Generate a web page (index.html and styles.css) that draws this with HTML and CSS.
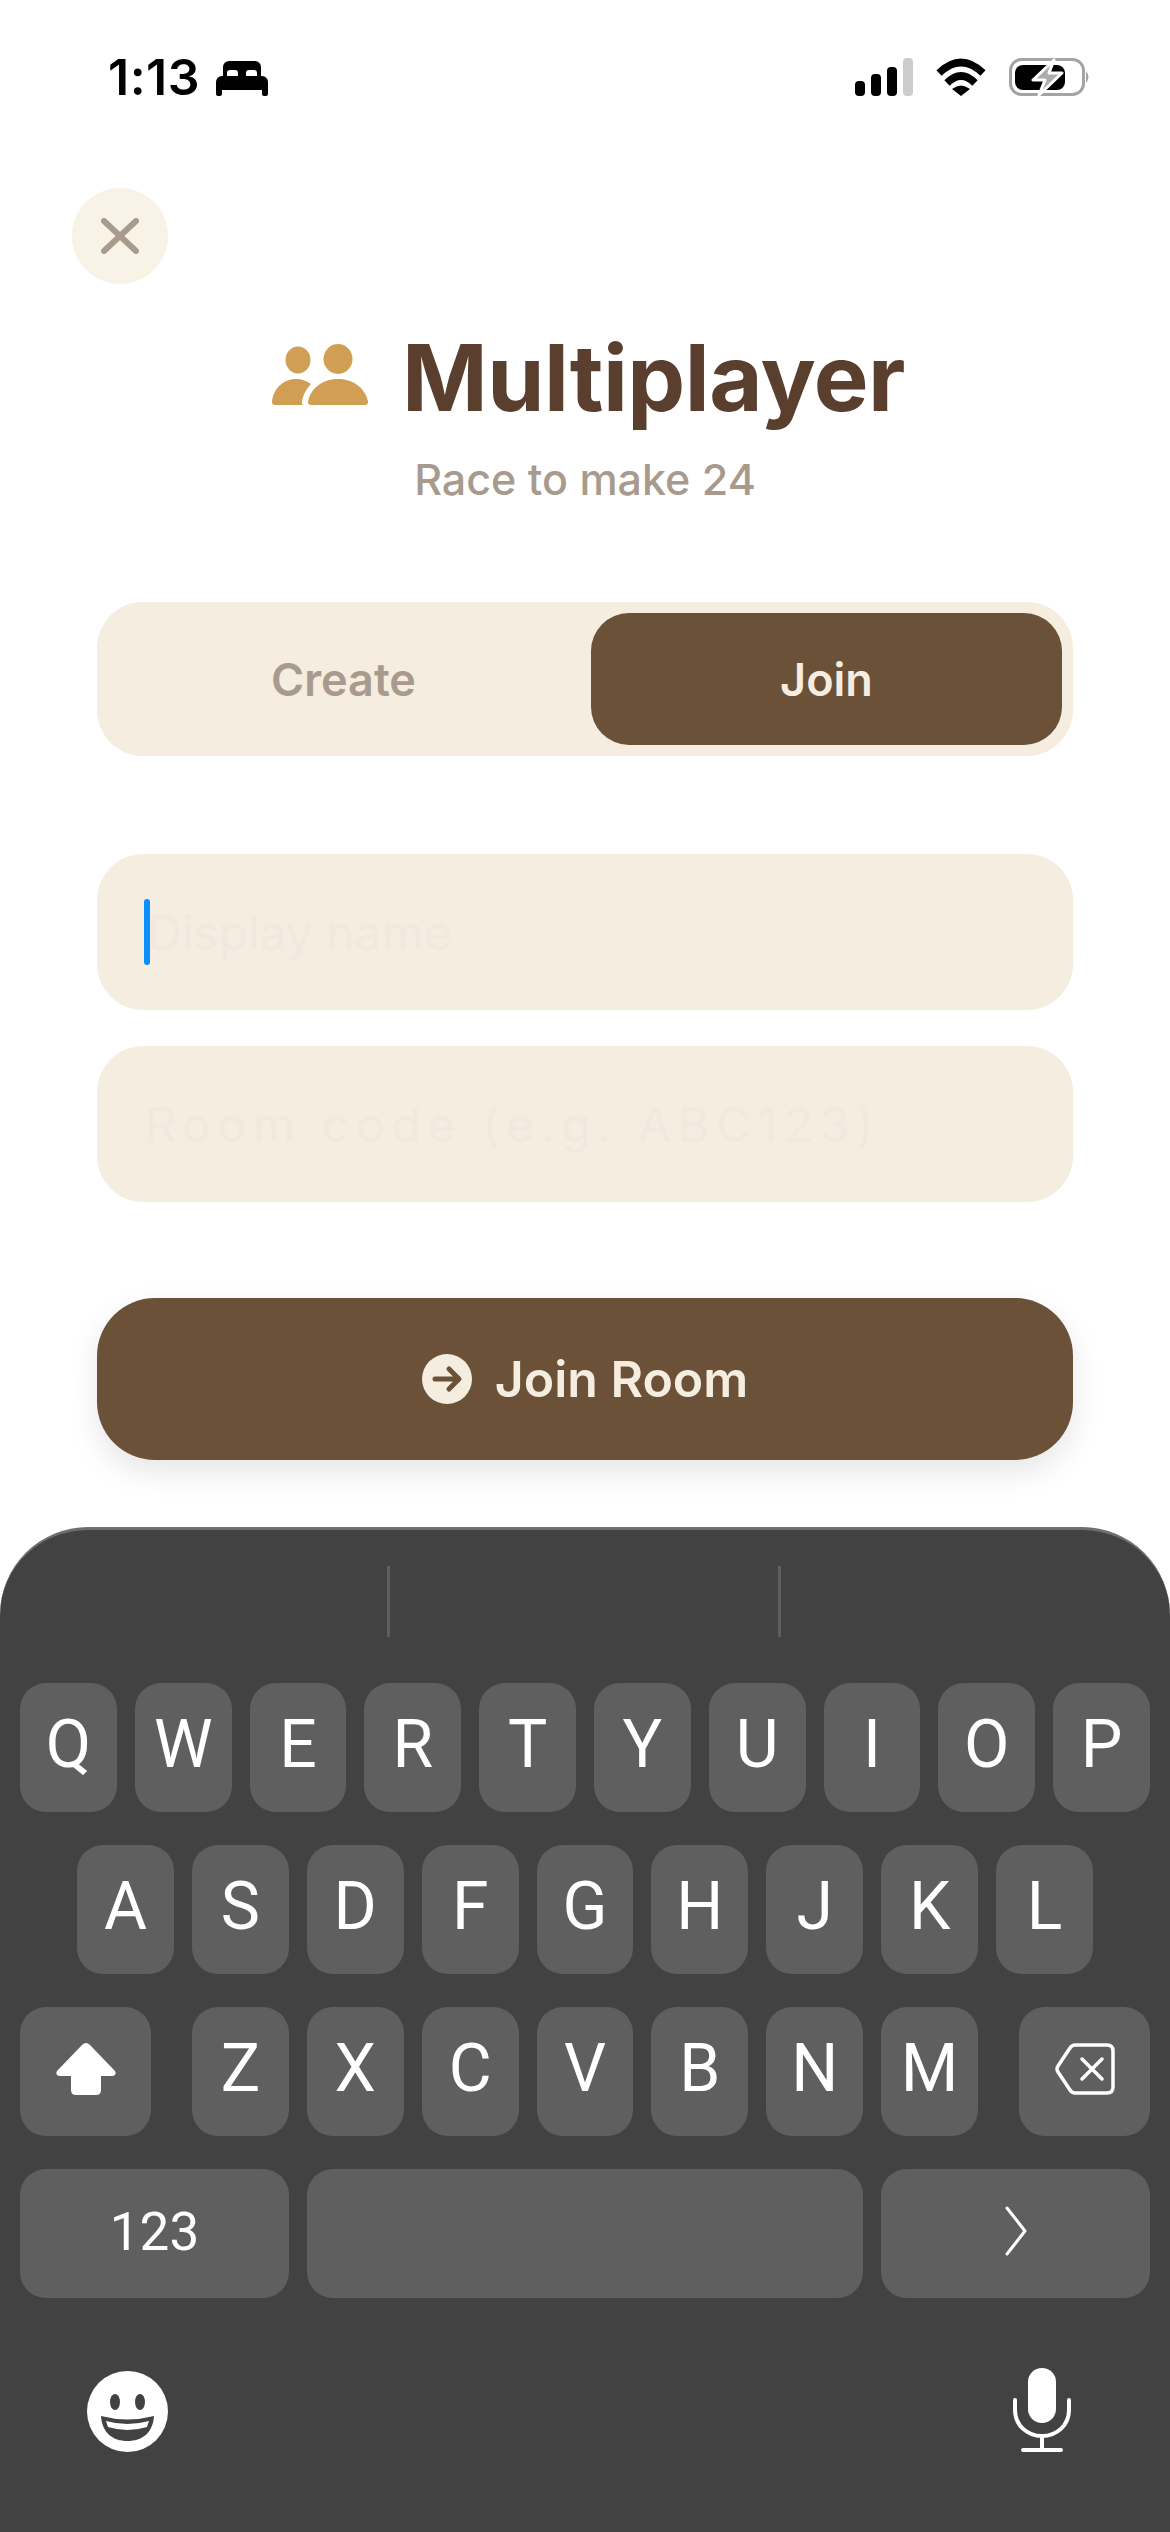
FILE: index.html
```html
<!DOCTYPE html>
<html lang="en">
<head>
    <meta charset="UTF-8">
    <meta name="viewport" content="width=device-width, initial-scale=1.0">
    <title>Multiplayer</title>
    <link rel="stylesheet" href="styles.css">
</head>
<body>
<div class="screen">

    <!-- Status Bar -->
    <header class="status-bar">
        <div class="status-left">
            <span class="time">1:13</span>
            <svg class="bed-icon" viewBox="0 0 52 35" width="52" height="35">
                <path d="M7 15V6a6 6 0 0 1 6-6h26a6 6 0 0 1 6 6v9h-4v-3a3 3 0 0 0-3-3h-5a3 3 0 0 0-3 3v3h-8v-3a3 3 0 0 0-3-3h-5a3 3 0 0 0-3 3v3z"/>
                <path d="M6 15h40a6 6 0 0 1 6 6v12a2 2 0 0 1-2 2h-2a2 2 0 0 1-2-2v-4H6v4a2 2 0 0 1-2 2H2a2 2 0 0 1-2-2V21a6 6 0 0 1 6-6z"/>
            </svg>
        </div>
        <div class="status-right">
            <svg viewBox="0 0 58 38" width="58" height="38">
                <rect x="0" y="23" width="10" height="15" rx="4"/>
                <rect x="16" y="16" width="10" height="22" rx="4"/>
                <rect x="32" y="9" width="10" height="29" rx="4"/>
                <rect x="48" y="0" width="10" height="38" rx="4" fill="#cccccc"/>
            </svg>
            <svg viewBox="0 0 50 38" width="50" height="38">
                <path d="M3 15Q25 -6 47 15" fill="none" stroke="#000" stroke-width="7.5"/>
                <path d="M11 25Q25 11 39 25" fill="none" stroke="#000" stroke-width="7.5"/>
                <path d="M16 31Q25 24 34 31L25 38Z"/>
            </svg>
            <svg viewBox="0 0 82 38" width="82" height="38">
                <rect x="1.5" y="1.5" width="73" height="35" rx="11" fill="none" stroke="#a3a3a3" stroke-width="3"/>
                <rect x="6" y="7" width="50" height="25" rx="8"/>
                <path d="M77 13Q82 19 77 25Z" fill="#a3a3a3"/>
                <path d="M45 2L24 22H36L30 37L53 15H40Z" fill="#adadad" stroke="#fff" stroke-width="3" stroke-linejoin="round"/>
            </svg>
        </div>
    </header>

    <!-- Close Button -->
    <button class="close-btn">
        <svg viewBox="0 0 38 36" width="38" height="36">
            <path d="M3 3L35 33M35 3L3 33" fill="none" stroke="#a99b8c" stroke-width="6" stroke-linecap="round"/>
        </svg>
    </button>

    <!-- Heading -->
    <div class="heading">
        <svg class="people-icon" viewBox="0 0 96 61" width="96" height="61">
            <ellipse cx="26" cy="16" rx="12.5" ry="13.5"/>
            <ellipse cx="66" cy="15" rx="14.5" ry="15"/>
            <path d="M3 61a3 3 0 0 1-3-3C1 45 11 35 24 35c6 0 11 2 15 5-5 5-8 11-9 17 0 2 0 3 1 4z"/>
            <path d="M39 61a3 3 0 0 1-3-3C38 45 50 35 66 35s28 10 30 23a3 3 0 0 1-3 3z"/>
        </svg>
        <h1 class="title">Multiplayer</h1>
    </div>
    <p class="subtitle">Race to make 24</p>

    <!-- Create / Join -->
    <div class="segment">
        <div class="segment-item">Create</div>
        <div class="segment-item active">Join</div>
    </div>

    <!-- Join Form -->
    <div class="form">
        <div class="field">
            <span class="cursor"></span>
            <span class="placeholder name-placeholder">Display name</span>
        </div>
        <div class="field">
            <span class="placeholder code-placeholder">Room code (e.g. ABC123)</span>
        </div>
        <button class="join-btn">
            <svg viewBox="0 0 50 50" width="50" height="50">
                <circle cx="25" cy="25" r="25" fill="#f5eddf"/>
                <path d="M13 25H36M27 15L37 25L27 35" fill="none" stroke="#6b5138" stroke-width="5" stroke-linecap="round" stroke-linejoin="round"/>
            </svg>
            <span>Join Room</span>
        </button>
    </div>

    <!-- Keyboard -->
    <div class="keyboard">
        <div class="suggestions">
            <div class="suggestion-mid"></div>
        </div>
        <div class="key-rows">
            <div class="key-row">
                <div class="key">Q</div><div class="key">W</div><div class="key">E</div><div class="key">R</div><div class="key">T</div>
                <div class="key">Y</div><div class="key">U</div><div class="key">I</div><div class="key">O</div><div class="key">P</div>
            </div>
            <div class="key-row row-home">
                <div class="key">A</div><div class="key">S</div><div class="key">D</div><div class="key">F</div><div class="key">G</div>
                <div class="key">H</div><div class="key">J</div><div class="key">K</div><div class="key">L</div>
            </div>
            <div class="key-row row-shift">
                <div class="key key-mod">
                    <svg viewBox="0 0 60 52" width="60" height="52">
                        <path d="M26 2Q30 -2 34 2L59 28Q61 32 57 33H45V47Q45 52 40 52H20Q15 52 15 47V33H3Q-1 32 1 28Z" fill="#fff"/>
                    </svg>
                </div>
                <div class="letters">
                    <div class="key">Z</div><div class="key">X</div><div class="key">C</div><div class="key">V</div>
                    <div class="key">B</div><div class="key">N</div><div class="key">M</div>
                </div>
                <div class="key key-mod">
                    <svg viewBox="0 0 60 52" width="60" height="52">
                        <path d="M20 2H52Q58 2 58 8V44Q58 50 52 50H20Q17 50 15 47L3 29Q1 26 3 23L15 5Q17 2 20 2Z" fill="none" stroke="#fff" stroke-width="3.5"/>
                        <path d="M27 16L47 36M47 16L27 36" fill="none" stroke="#fff" stroke-width="3.5" stroke-linecap="round"/>
                    </svg>
                </div>
            </div>
            <div class="key-row">
                <div class="key key-wide key-num">123</div>
                <div class="key key-space"></div>
                <div class="key key-wide">
                    <svg viewBox="0 0 22 50" width="22" height="50">
                        <path d="M2 2L20 25L2 48" fill="none" stroke="#fff" stroke-width="3" stroke-linecap="round" stroke-linejoin="round"/>
                    </svg>
                </div>
            </div>
        </div>
        <div class="key-bottom">
            <svg viewBox="0 0 81 81" width="81" height="81">
                <circle cx="40.5" cy="40.5" r="40.5" fill="#fff"/>
                <ellipse cx="28" cy="31" rx="5" ry="8" fill="#424242"/>
                <ellipse cx="53" cy="31" rx="5" ry="8" fill="#424242"/>
                <path d="M14 45Q40.5 52 67 45C66 62 55 70 40.5 70S15 62 14 45Z" fill="#424242"/>
                <path d="M19 50Q40.5 56 62 50L60 56Q40.5 62 21 56Z" fill="#fff"/>
            </svg>
            <svg viewBox="0 0 58 84" width="58" height="84">
                <rect x="15" y="0" width="28" height="55" rx="14" fill="#fff"/>
                <path d="M2 32V42C2 57 14 68 29 68S56 57 56 42V32" fill="none" stroke="#fff" stroke-width="4" stroke-linecap="round"/>
                <path d="M29 68V81M10 82H48" fill="none" stroke="#fff" stroke-width="4" stroke-linecap="round"/>
            </svg>
        </div>
    </div>

</div>
</body>
</html>
```

FILE: styles.css
```css
/* General Page Styling */
body {
    margin: 0;
    padding: 0;
    background: white;
    font-family: 'Inter', 'Liberation Sans', sans-serif;
}

.screen {
    width: 1170px;
    height: 2532px;
    display: flex;
    flex-direction: column;
    overflow: hidden;
}

/* Status Bar */
.status-bar {
    height: 38px;
    padding: 58px 79px 22px 108px;
    display: flex;
    justify-content: space-between;
    align-items: flex-end;
}

.status-left {
    display: flex;
    align-items: flex-end;
    gap: 16px;
}

.time {
    font-size: 50px;
    font-weight: 600;
    line-height: 38px;
    color: black;
    letter-spacing: 0.5px;
}

.status-right {
    display: flex;
    align-items: flex-end;
    gap: 23px;
}

/* Close Button */
.close-btn {
    width: 96px;
    height: 96px;
    margin: 70px 0 0 72px;
    padding: 0;
    border: none;
    border-radius: 50%;
    background: #f8f2e7;
    display: flex;
    align-items: center;
    justify-content: center;
}

/* Heading */
.heading {
    margin-top: 44px;
    padding-left: 7px;
    display: flex;
    align-items: center;
    justify-content: center;
    gap: 34px;
}

.people-icon {
    fill: #d19f53;
    margin-bottom: 8px;
}

.title {
    margin: 0;
    font-size: 92px;
    font-weight: 700;
    line-height: 100px;
    letter-spacing: -0.5px;
    color: #5a3f2e;
}

.subtitle {
    margin: 23px 0 0;
    text-align: center;
    font-size: 43px;
    font-weight: 500;
    line-height: 56px;
    color: #a89b8e;
}

/* Create / Join */
.segment {
    margin: 95px 97px 0;
    padding: 11px;
    height: 132px;
    display: flex;
    gap: 12px;
    background: #f5eddf;
    border-radius: 46px;
}

.segment-item {
    flex: 1;
    display: flex;
    align-items: center;
    justify-content: center;
    border-radius: 38px;
    font-size: 45px;
    font-weight: 600;
    color: #a89b8e;
}

.segment-item.active {
    background: #6b5138;
    color: #f5eddf;
}

/* Join Form */
.form {
    margin: 98px 97px 0;
    display: flex;
    flex-direction: column;
    gap: 36px;
}

.field {
    position: relative;
    height: 156px;
    padding-left: 48px;
    display: flex;
    align-items: center;
    background: #f5eddf;
    border-radius: 46px;
}

.cursor {
    position: absolute;
    left: 47px;
    top: 45px;
    width: 6px;
    height: 66px;
    border-radius: 3px;
    background: #0a8fff;
}

.placeholder {
    font-size: 48px;
    color: #f3e8e0;
}

.name-placeholder {
    margin-left: 2px;
}

.code-placeholder {
    letter-spacing: 6.7px;
}

.join-btn {
    margin-top: 60px;
    height: 162px;
    padding: 0;
    border: none;
    border-radius: 58px;
    background: #6b5138;
    color: #f5eddf;
    font-family: inherit;
    font-size: 50px;
    font-weight: 600;
    display: flex;
    align-items: center;
    justify-content: center;
    gap: 23px;
    box-shadow: 0 12px 30px rgba(0, 0, 0, 0.1);
}

/* Keyboard */
.keyboard {
    margin-top: auto;
    height: 1002px;
    background: #424242;
    border-top: 3px solid #6e6e6e;
    border-radius: 88px 88px 0 0;
    font-family: 'Roboto', 'Liberation Sans', sans-serif;
    color: white;
}

.suggestions {
    margin-top: 36px;
    height: 71px;
}

.suggestion-mid {
    margin-left: 387px;
    width: 388px;
    height: 71px;
    border-left: 3px solid #5f5f5f;
    border-right: 3px solid #5f5f5f;
}

.key-rows {
    margin-top: 46px;
    display: flex;
    flex-direction: column;
    gap: 33px;
}

.key-row {
    padding: 0 20px;
    height: 129px;
    display: flex;
    gap: 18px;
}

.row-home {
    padding: 0 77px;
}

.row-shift {
    justify-content: space-between;
    gap: 0;
}

.letters {
    width: 786px;
    display: flex;
    gap: 18px;
}

.key {
    flex: 1;
    padding-bottom: 5px;
    box-sizing: border-box;
    display: flex;
    align-items: center;
    justify-content: center;
    background: #5f5f5f;
    border-radius: 26px;
    font-size: 66px;
    font-weight: 400;
    line-height: 1;
}

.key-mod {
    flex: 0 0 131px;
}

.key-wide {
    flex: 0 0 269px;
}

.key-num {
    padding-bottom: 3px;
    font-size: 53px;
}

.key-bottom {
    margin-top: 70px;
    padding: 0 99px 0 87px;
    display: flex;
    justify-content: space-between;
    align-items: flex-end;
}
```
